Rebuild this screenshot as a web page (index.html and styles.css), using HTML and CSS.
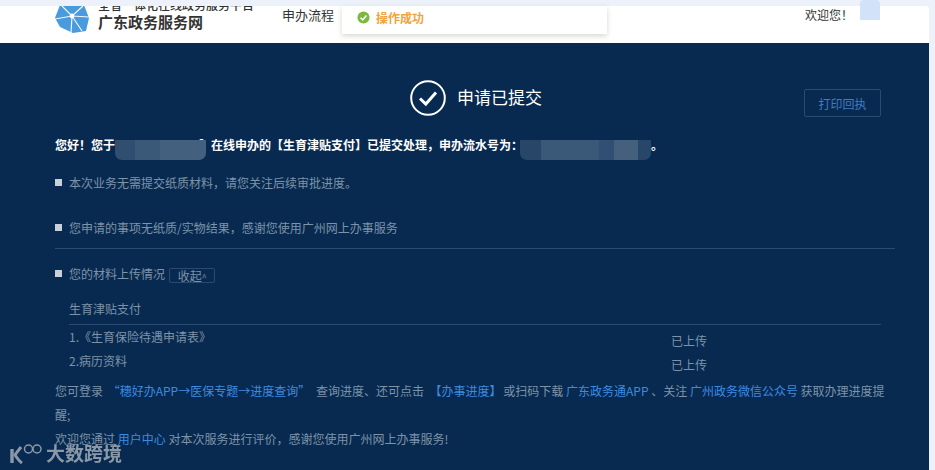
FILE: index.html
```html
<!DOCTYPE html>
<html lang="zh-CN">
<head>
<meta charset="utf-8">
<title>申请已提交</title>
<link rel="stylesheet" href="styles.css">
</head>
<body>
<div class="page">
  <header class="top">
    <div class="brand">
      <svg class="logo" viewBox="0 0 34 29" width="34" height="29" aria-hidden="true">
        <path d="M5 0H29L34 13L31 26L18 28L5 22L0 13Z" fill="#4a9ade"/>
        <g stroke="#eef7fd" stroke-width="1.2" fill="none">
          <path d="M17 11L7 1M17 11L28 1M17 11L34 12M17 11L27 26M17 11L16 28M17 11L0 14"/>
        </g>
        <circle cx="17" cy="11" r="2.4" fill="#fff"/>
      </svg>
      <div class="brand-text">
        <div class="brand-sub">全省一体化在线政务服务平台</div>
        <div class="brand-name">广东政务服务网</div>
      </div>
    </div>
    <nav class="nav">申办流程</nav>
    <div class="welcome">欢迎您<span class="cm">！</span></div>
  </header>

  <main class="main">
    <div class="result">
      <svg class="check" viewBox="0 0 36 36" width="36" height="36" aria-hidden="true">
        <circle cx="18" cy="18" r="16.8" fill="none" stroke="#fff" stroke-width="2"/>
        <path d="M10 18.5L15.8 24L26 12.5" fill="none" stroke="#fff" stroke-width="3"/>
      </svg>
      <h1 class="result-title">申请已提交</h1>
      <button class="print">打印回执</button>
    </div>

    <p class="greet">您好<span class="cm">！</span>您于　　　　　　　】在线申办的【生育津贴支付】已提交处理<span class="cm">，</span>申办流水号为<span class="cm">：</span>　　　　　　　　　　　<span class="period">。</span></p>

    <p class="item item-first">本次业务无需提交纸质材料<span class="cm">，</span>请您关注后续审批进度。</p>
    <p class="item item-second">您申请的事项无纸质/实物结果<span class="cm">，</span>感谢您使用广州网上办事服务</p>
    <div class="rule"></div>
    <p class="item item-third">您的材料上传情况 <span class="toggle">收起<span class="caret">^</span></span></p>

    <section class="files">
      <div class="files-title">生育津贴支付</div>
      <div class="file-row"><span class="file-name">1.《生育保险待遇申请表》</span><span class="file-state">已上传</span></div>
      <div class="file-row"><span class="file-name">2.病历资料</span><span class="file-state">已上传</span></div>
    </section>

    <p class="foot">您可登录 <a class="link link-quote">“穗好办APP→医保专题→进度查询”</a> 查询进度、还可点击 <a class="link link-bracket">【办事进度】</a> 或扫码下载 <a class="link">广东政务通APP</a> 、关注 <a class="link">广州政务微信公众号</a> 获取办理进度提醒;</p>
    <p class="foot foot-last">欢迎您通过 <a class="link">用户中心</a> 对本次服务进行评价<span class="cm">，</span>感谢您使用广州网上办事服务!</p>
  </main>

  <div class="toast">
    <svg viewBox="0 0 14 14" width="13" height="13" aria-hidden="true">
      <circle cx="7" cy="7" r="6.5" fill="#7cb83e"/>
      <path d="M3.8 7.2L6.2 9.5L10.2 4.8" fill="none" stroke="#fff" stroke-width="1.6"/>
    </svg>
    <span>操作成功</span>
  </div>
  <div class="avatar"></div>
  <div class="blur blur-date"></div>
  <div class="blur blur-no"></div>
  <div class="mark">
    <svg class="mark-logo" viewBox="0 0 34 22" width="34" height="22" aria-hidden="true">
      <g fill="none" stroke="#9aa5b1">
        <path d="M3 7V21" stroke-width="3.4"/>
        <path d="M12 5C9 9 7 11 6 13C8 16 10 19 13 21" stroke-width="3"/>
        <circle cx="19.5" cy="7" r="4" stroke-width="1.5"/>
        <circle cx="28" cy="7" r="4" stroke-width="1.5"/>
      </g>
    </svg>
    <span class="mark-text">大数跨境</span>
  </div>
</div>
</body>
</html>
```

FILE: styles.css
```css
* { box-sizing: border-box; }
html, body { margin: 0; height: 100%; }
body {
  background: #edf1fa;
  font-family: "Noto Sans CJK SC", "Liberation Sans", sans-serif;
  font-size: 12px;
  overflow: hidden;
}
p, h1 { margin: 0; }
.cm { font-family: "Noto Sans CJK TC", sans-serif; }
.period { margin-left: 2px; }
.page {
  position: relative;
  width: 929px;
  height: 470px;
  padding-top: 6px;
}
.top {
  height: 37px;
  background: #fff;
  display: flex;
  align-items: flex-start;
  padding-left: 55px;
  border-radius: 0 3px 0 0;
  color: #333;
  overflow: hidden;
}
.brand { display: flex; width: 227px; }
.logo { flex: none; margin-top: -1px; }
.brand-text { margin-left: 9px; margin-top: -10px; }
.brand-sub { font-size: 12px; line-height: 17px; color: #333; font-weight: 500; }
.brand-name { font-size: 15px; line-height: 18px; font-weight: 700; color: #333; }
.nav { font-size: 13px; line-height: 18px; }
.welcome { margin-left: auto; margin-right: 76px; line-height: 18px; }
.main {
  height: 427px;
  background: #082a50;
  padding: 0 34px 0 55px;
  color: #7d93a8;
  overflow: hidden;
}
.result {
  position: relative;
  height: 74px;
  padding-top: 37px;
  padding-left: 355px;
  display: flex;
  align-items: flex-start;
}
.check { flex: none; }
.result-title {
  margin-left: 11px;
  margin-top: 1px;
  font-size: 17px;
  font-weight: 400;
  line-height: 32px;
  color: #fff;
}
.print {
  margin-left: auto;
  margin-right: 14px;
  margin-top: 9px;
  width: 77px;
  height: 28px;
  padding: 0;
  background: transparent;
  border: 1px solid #2a4a70;
  border-radius: 2px;
  color: #3f7cc4;
  font: inherit;
}
.greet {
  margin-top: 19px;
  line-height: 18px;
  color: #fff;
  font-weight: 700;
  white-space: nowrap;
}
.item {
  position: relative;
  padding-left: 14px;
  line-height: 18px;
}
.item::before {
  content: "";
  position: absolute;
  left: 0;
  top: 5px;
  width: 7px;
  height: 7px;
  background: #c8d0d9;
}
.item-first { margin-top: 20px; }
.item-second { margin-top: 27px; }
.item-third { margin-top: 16px; }
.rule { margin-top: 11px; height: 1px; background: #2a4a70; }
.toggle {
  display: inline-block;
  width: 46px;
  height: 15px;
  margin-left: 1px;
  padding-left: 8px;
  line-height: 13px;
  border: 1px solid #2a4a70;
  border-radius: 2px;
  vertical-align: -2px;
}
.caret { font-size: 9px; }
.files { margin: 17px 14px 0; }
.files-title {
  height: 25px;
  line-height: 18px;
  border-bottom: 1px solid #2a4a70;
}
.file-row {
  display: flex;
  height: 24px;
  line-height: 24px;
}
.file-name { width: 602px; }
.file-state { position: relative; top: 4px; }
.foot {
  margin-top: 6px;
  line-height: 24px;
}
.foot-last { margin-top: 0; }
.link { color: #3d8be0; }
.link-quote { margin: 0 3px 0 2px; }
.link-bracket { margin: 0 -1px 0 3px; }
.toast {
  position: absolute;
  left: 342px;
  top: 6px;
  width: 265px;
  height: 28px;
  padding: 0 0 6px 15px;
  background: #fff;
  box-shadow: 0 2px 5px rgba(120, 130, 100, .3);
  display: flex;
  align-items: center;
  gap: 6px;
  color: #f0a33a;
  font-weight: 700;
}
.avatar {
  position: absolute;
  left: 860px;
  top: 0;
  width: 20px;
  height: 20px;
  background: #d2e2f9;
  border-radius: 4px 4px 0 0;
}
.blur {
  position: absolute;
  top: 140px;
  height: 20px;
  border-radius: 0 0 7px 7px;
  filter: blur(.6px);
}
.blur-date {
  left: 115px;
  width: 91px;
  background: linear-gradient(90deg, #2f4e70 0 22%, #3a5878 22% 50%, #43607f 50% 100%);
}
.blur-no {
  left: 520px;
  width: 131px;
  background: linear-gradient(90deg, #274668 0 16%, #3a5878 16% 60%, #304f72 60% 72%, #45607c 72% 90%, #274668 90% 100%);
}
.mark {
  position: absolute;
  left: 9px;
  top: 441px;
  display: flex;
  align-items: center;
  gap: 3px;
  opacity: .9;
}
.mark-logo { flex: none; }
.mark-text { font-size: 19px; font-weight: 700; line-height: 22px; color: #9aa5b1; margin-top: 1px; }
```
